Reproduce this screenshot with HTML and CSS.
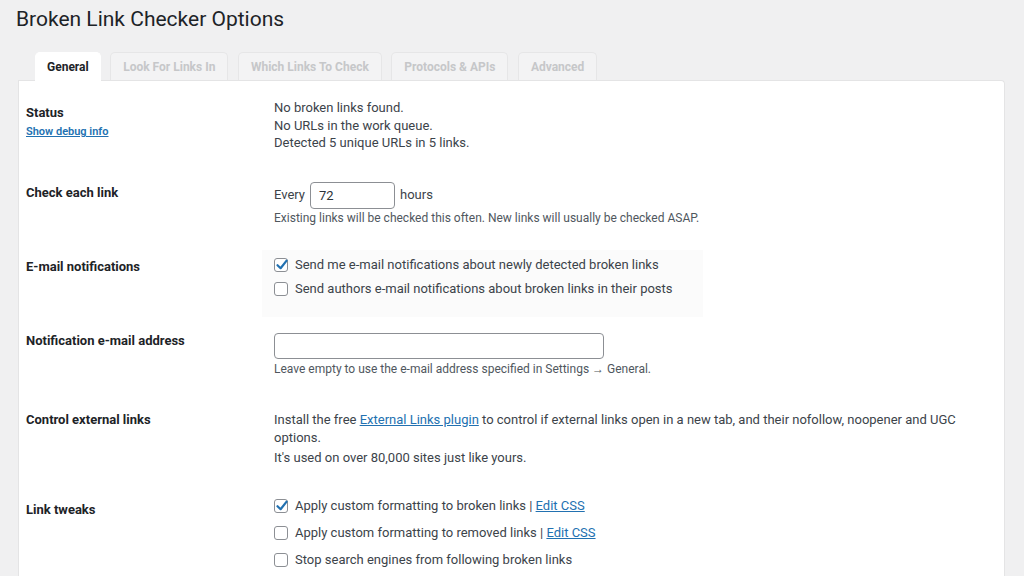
FILE: index.html
```html
<!DOCTYPE html>
<html lang="en">
<head>
<meta charset="utf-8">
<title>Broken Link Checker Options</title>
<link rel="stylesheet" href="styles.css">
</head>
<body>
<div class="wrap">
  <h1 class="title">Broken Link Checker Options</h1>
  <div class="tabs">
    <div class="tab active">General</div>
    <div class="tab">Look For Links In</div>
    <div class="tab">Which Links To Check</div>
    <div class="tab">Protocols &amp; APIs</div>
    <div class="tab">Advanced</div>
  </div>
  <div class="panel">
    <div class="row r1">
      <div class="label">Status<a class="debug" href="#">Show debug info</a></div>
      <div class="value lines">
        <div>No broken links found.</div>
        <div>No URLs in the work queue.</div>
        <div>Detected 5 unique URLs in 5 links.</div>
      </div>
    </div>
    <div class="row r2">
      <div class="label">Check each link</div>
      <div class="value">
        <div class="inline"><span>Every</span><span class="input small">72</span><span>hours</span></div>
        <div class="help">Existing links will be checked this often. New links will usually be checked ASAP.</div>
      </div>
    </div>
    <div class="row r3">
      <div class="label">E-mail notifications</div>
      <div class="value">
        <div class="box">
          <div class="check"><span class="cb on"><svg viewBox="0 0 16 16" width="16" height="16"><path d="M3.5 8.2 L6.6 11.2 L12.6 3.6" fill="none" stroke="#2271b1" stroke-width="2.2" stroke-linecap="round" stroke-linejoin="round"/></svg></span><span>Send me e-mail notifications about newly detected broken links</span></div>
          <div class="check"><span class="cb"></span><span>Send authors e-mail notifications about broken links in their posts</span></div>
        </div>
      </div>
    </div>
    <div class="row r4">
      <div class="label">Notification e-mail address</div>
      <div class="value">
        <div class="input wide"></div>
        <div class="help">Leave empty to use the e-mail address specified in Settings → General.</div>
      </div>
    </div>
    <div class="row r5">
      <div class="label">Control external links</div>
      <div class="value">
        <p class="para">Install the free <a href="#">External Links plugin</a> to control if external links open in a new tab, and their nofollow, noopener and UGC options.</p>
        <p class="para second">It's used on over 80,000 sites just like yours.</p>
      </div>
    </div>
    <div class="row r6">
      <div class="label">Link tweaks</div>
      <div class="value">
        <div class="check tall"><span class="cb on"><svg viewBox="0 0 16 16" width="16" height="16"><path d="M3.5 8.2 L6.6 11.2 L12.6 3.6" fill="none" stroke="#2271b1" stroke-width="2.2" stroke-linecap="round" stroke-linejoin="round"/></svg></span><span>Apply custom formatting to broken links | <a href="#">Edit CSS</a></span></div>
        <div class="check tall"><span class="cb"></span><span>Apply custom formatting to removed links | <a href="#">Edit CSS</a></span></div>
        <div class="check tall"><span class="cb"></span><span>Stop search engines from following broken links</span></div>
      </div>
    </div>
  </div>
</div>
</body>
</html>
```

FILE: styles.css
```css
html, body {
  margin: 0;
  padding: 0;
  height: 100%;
  overflow: hidden;
}
body {
  background: #f0f0f1;
  font-family: Roboto, "Noto Sans", "Liberation Sans", sans-serif;
  font-size: 13px;
  color: #3c434a;
}
.wrap {
  padding: 0 19px 0 18px;
}
.title {
  margin: 6px 0 0 -2px;
  font-size: 21px;
  line-height: 26px;
  font-weight: 400;
  color: #1d2327;
}
.tabs {
  display: flex;
  gap: 9.5px;
  padding-left: 17px;
  margin-top: 20px;
  height: 28px;
  position: relative;
  z-index: 1;
}
.tab {
  height: 28px;
  box-sizing: border-box;
  padding: 0 12px;
  line-height: 28px;
  font-size: 12px;
  font-weight: 700;
  color: #c6c7c9;
  background: #f3f3f4;
  border: 1px solid #e6e6e7;
  border-bottom: none;
  border-radius: 5px 5px 0 0;
}
.tab.active {
  background: #fff;
  color: #1d2327;
  border-color: #fff;
  height: 29px;
  padding: 0 11px;
}
.panel {
  background: #fff;
  border: 1px solid #e4e4e5;
  border-bottom: none;
  border-radius: 0 4px 0 0;
  padding: 1px 0 0 7px;
  height: 496px;
  box-sizing: border-box;
  overflow: hidden;
}
.row {
  display: grid;
  grid-template-columns: 248px 1fr;
  align-items: start;
  padding: 15px 0;
}
.label {
  font-weight: 700;
  color: #1d2327;
  line-height: 18px;
}
.value {
  line-height: 17.5px;
}
.debug {
  display: block;
  font-size: 11px;
  font-weight: 600;
  color: #2271b1;
  text-decoration: underline;
  line-height: 19px;
}
a {
  color: #2271b1;
  text-decoration: underline;
}
.r1 .value { margin-top: 2px; }
.r1 .label { margin-top: 7px; }
.r2 .label { margin-top: 2px; }
.inline {
  display: flex;
  align-items: center;
  gap: 5px;
  height: 27px;
}
.input {
  display: inline-block;
  box-sizing: border-box;
  border: 1px solid #8c8f94;
  border-radius: 4px;
  background: #fff;
  color: #2c3338;
}
.input.small {
  width: 85px;
  height: 27px;
  line-height: 25px;
  padding-left: 8px;
}
.input.wide {
  display: block;
  width: 330px;
  height: 26px;
  margin-top: 1px;
}
.help {
  font-size: 12px;
  line-height: 16px;
  margin-top: 1px;
  color: #50575e;
}
.r3 {
  padding: 9px 0 0;
}
.r3 .label { margin-top: 8.5px; }
.box {
  margin-left: -12px;
  width: 441px;
  box-sizing: border-box;
  padding: 3px 12px 16px;
  background: #fbfbfb;
}
.check {
  display: flex;
  align-items: center;
  height: 24px;
}
.check.tall {
  height: 27px;
}
.cb {
  flex: none;
  width: 14px;
  height: 14px;
  box-sizing: border-box;
  border: 1px solid #8c8f94;
  border-radius: 3px;
  background: #fff;
  margin-right: 7px;
  position: relative;
}
.cb svg {
  position: absolute;
  left: -1px;
  top: -2px;
}
.r4 .help { margin-top: 2px; }
.r5 {
  padding-top: 19px;
}
.para {
  margin: 0;
  line-height: 18px;
  max-width: 720px;
}
.para.second {
  margin-top: 2px;
}
.r6 {
  padding-top: 11px;
}
.r6 .label { margin-top: 8.5px; }
```
